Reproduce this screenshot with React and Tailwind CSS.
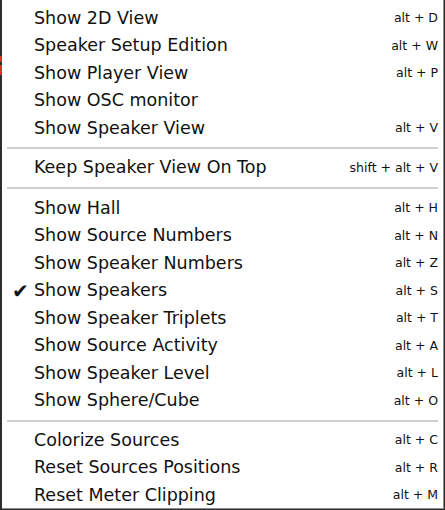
const groups = [
  [
    ['Show 2D View', 'alt + D'],
    ['Speaker Setup Edition', 'alt + W'],
    ['Show Player View', 'alt + P'],
    ['Show OSC monitor', ''],
    ['Show Speaker View', 'alt + V'],
  ],
  [['Keep Speaker View On Top', 'shift + alt + V']],
  [
    ['Show Hall', 'alt + H'],
    ['Show Source Numbers', 'alt + N'],
    ['Show Speaker Numbers', 'alt + Z'],
    ['Show Speakers', 'alt + S', true],
    ['Show Speaker Triplets', 'alt + T'],
    ['Show Source Activity', 'alt + A'],
    ['Show Speaker Level', 'alt + L'],
    ['Show Sphere/Cube', 'alt + O'],
  ],
  [
    ['Colorize Sources', 'alt + C'],
    ['Reset Sources Positions', 'alt + R'],
    ['Reset Meter Clipping', 'alt + M'],
  ],
];

function Item({ label, shortcut, checked }) {
  return (
    <div className="relative flex h-[27.5px] items-center pl-[32px] pr-[5px]">
      {checked && (
        <span className="absolute left-[10px] top-[1px] text-[20px] leading-[26px]">✔</span>
      )}
      <span className="flex-1 text-[17.5px] leading-none">{label}</span>
      <span className="text-[12.5px] leading-none">{shortcut}</span>
    </div>
  );
}

export default function App() {
  return (
    <div
      className="flex h-[510px] w-[445px] bg-[#2e2e2e] text-[#111]"
      style={{ fontFamily: '"DejaVu Sans", Verdana, sans-serif' }}
    >
      <div className="flex w-[2px] flex-col">
        <div className="h-[56px]" />
        <div className="h-[6px] bg-[#d8322c]" />
        <div className="h-[3px]" />
        <div className="h-[10px] bg-[#d8322c]" />
      </div>
      <div className="mb-[1px] flex h-[509px] w-[442px] flex-col border-r border-b border-[#8c8c8c] bg-white pt-[4.5px]">
        {groups.map((g, gi) => (
          <div key={gi}>
            {gi > 0 && (
              <div className={`flex items-center px-[5px] ${gi === 2 ? 'h-[13px]' : 'h-[12px]'}`}>
                <div className="h-[2px] w-full bg-[#cfcfcf]" />
              </div>
            )}
            {g.map(([l, s, c]) => (
              <Item key={l} label={l} shortcut={s} checked={c} />
            ))}
          </div>
        ))}
      </div>
    </div>
  );
}
